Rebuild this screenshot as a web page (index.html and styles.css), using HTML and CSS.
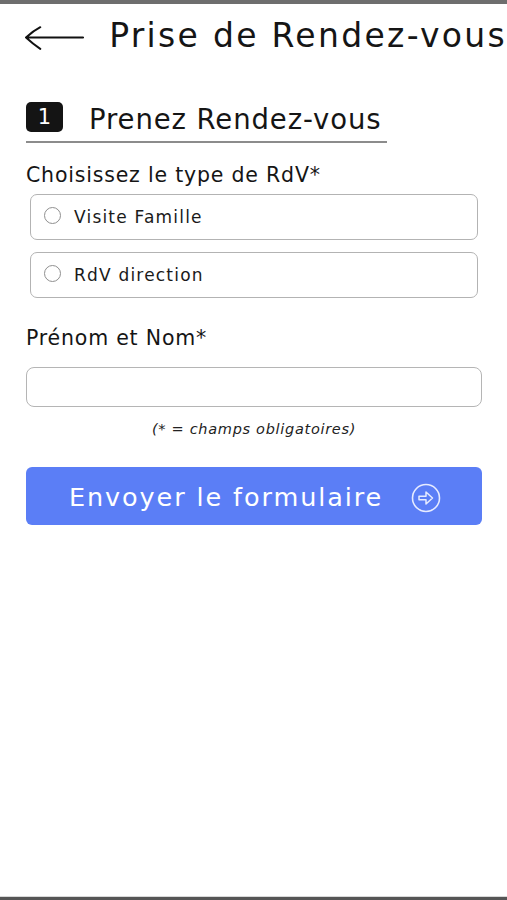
FILE: index.html
```html
<!DOCTYPE html>
<html lang="fr">
<head>
<meta charset="utf-8">
<title>Prise de Rendez-vous</title>
<link rel="stylesheet" href="styles.css">
</head>
<body>
<div class="topbar"></div>
<header class="header">
  <svg class="back" width="60" height="24" viewBox="0 0 60 24" aria-hidden="true">
    <path d="M1 11.5 H59 M1 11.5 Q8 5 15.5 1 M1 11.5 Q8 18 15.5 23" fill="none" stroke="#111" stroke-width="2" stroke-linecap="round"/>
  </svg>
  <h1 class="title">Prise de Rendez-vous</h1>
</header>
<main class="page">
  <div class="step">
    <span class="badge">1</span>
    <h2 class="step-title">Prenez Rendez-vous</h2>
  </div>
  <p class="label label-type">Choisissez le type de RdV*</p>
  <label class="option">
    <span class="radio"></span>
    <span class="option-text">Visite Famille</span>
  </label>
  <label class="option">
    <span class="radio"></span>
    <span class="option-text">RdV direction</span>
  </label>
  <p class="label label-name">Prénom et Nom*</p>
  <div class="input"></div>
  <p class="note">(* = champs obligatoires)</p>
  <button class="submit" type="button">
    <span class="submit-text">Envoyer le formulaire</span>
    <svg class="submit-icon" width="30" height="30" viewBox="0 0 30 30" aria-hidden="true">
      <circle cx="15" cy="15" r="13.5" fill="none" stroke="#e6ebff" stroke-width="1.6"/>
      <path d="M8 13.3 H15 V9 L21.5 15 L15 21 V16.7 H8 Z" fill="none" stroke="#e6ebff" stroke-width="1.5" stroke-linejoin="round"/>
    </svg>
  </button>
</main>
<div class="bottombar"></div>
</body>
</html>
```

FILE: styles.css
```css
html, body {
  margin: 0;
  padding: 0;
  background: #ffffff;
}

body {
  font-family: "DejaVu Sans", Verdana, sans-serif;
  color: #151515;
  min-height: 100vh;
  display: flex;
  flex-direction: column;
}

.topbar {
  height: 4px;
  background: #6e6e6e;
}

.header {
  display: flex;
  align-items: flex-start;
}

.back {
  display: block;
  margin: 22px 0 0 25px;
}

.title {
  margin: 13px 0 0 25px;
  font-size: 33px;
  line-height: 38px;
  font-weight: normal;
  letter-spacing: 2.3px;
  white-space: nowrap;
}

.page {
  padding: 0 25px 0 26px;
  display: flex;
  flex-direction: column;
}

.step {
  margin-top: 47px;
  width: 361px;
  display: flex;
  align-items: flex-start;
  gap: 26px;
  padding-bottom: 4px;
  border-bottom: 2px solid #8c8c8c;
}

.badge {
  width: 37px;
  height: 30px;
  border-radius: 5px;
  background: #141414;
  color: #ffffff;
  font-size: 21px;
  line-height: 30px;
  text-align: center;
}

.step-title {
  margin: 0;
  font-size: 27.5px;
  line-height: 35px;
  font-weight: normal;
  letter-spacing: 0.9px;
  white-space: nowrap;
}

.label {
  margin: 0;
  font-size: 20.5px;
  line-height: 24px;
  letter-spacing: 0.8px;
}

.label-type {
  margin-top: 20px;
  margin-bottom: 7px;
}

.option {
  margin: 0 4px 12px 4px;
  height: 44px;
  border: 1.5px solid #b3b3b3;
  border-radius: 7px;
  display: flex;
  align-items: center;
  padding-left: 13px;
  gap: 13px;
}

.radio {
  width: 15px;
  height: 15px;
  border: 1.5px solid #8f8f8f;
  border-radius: 50%;
  margin-top: -3px;
}

.option-text {
  font-size: 17px;
  letter-spacing: 1.2px;
  color: #1a1a1a;
}

.label-name {
  margin-top: 16px;
}

.input {
  margin-top: 17px;
  height: 38px;
  border: 1.5px solid #b5b5b5;
  border-radius: 8px;
}

.note {
  margin: 12px 0 0 0;
  font-size: 14.5px;
  line-height: 20px;
  font-style: italic;
  letter-spacing: 0.7px;
  text-align: center;
  color: #222;
}

.submit {
  margin-top: 28px;
  height: 58px;
  border: none;
  border-radius: 6px;
  background: #5b7ef6;
  color: #ffffff;
  font-family: inherit;
  display: flex;
  align-items: center;
  padding: 2px 0 0 43px;
  cursor: pointer;
}

.submit-text {
  font-size: 25.5px;
  letter-spacing: 1.9px;
}

.submit-icon {
  display: block;
  margin-left: 28px;
  margin-top: 2px;
}

.bottombar {
  margin-top: auto;
  height: 3px;
  background: #555555;
  border-top: 1px solid #d8d8d8;
}
```
